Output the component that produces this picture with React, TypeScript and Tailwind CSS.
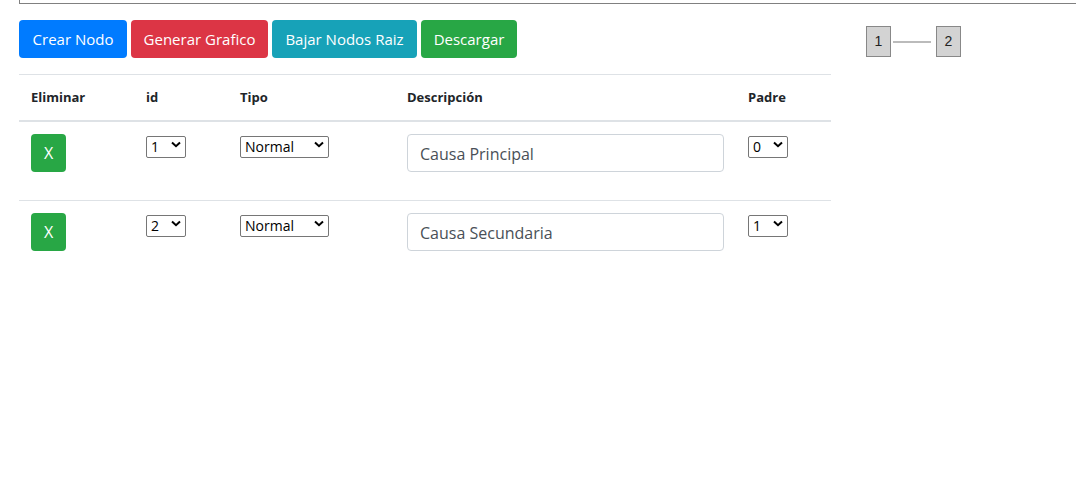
import React, { useState } from 'react';

type Nodo = { id: number; tipo: string; descripcion: string; padre: number };

const ChevronSelect: React.FC<{
  value: string;
  options: string[];
  width: string;
  onChange: (v: string) => void;
}> = ({ value, options, width, onChange }) => (
  <div className={`relative ${width} h-[22px]`}>
    <select
      value={value}
      onChange={(e) => onChange(e.target.value)}
      className="appearance-none w-full h-full border border-[#767676] rounded-[2px] bg-white pl-[4px] text-[14px] leading-[20px] text-black outline-none"
      style={{ fontFamily: '"Open Sans", "Noto Sans", sans-serif' }}
    >
      {options.map((o) => (
        <option key={o} value={o}>
          {o}
        </option>
      ))}
    </select>
    <svg
      className="pointer-events-none absolute right-[5px] top-[7px]"
      width="10"
      height="7"
      viewBox="0 0 10 7"
    >
      <path d="M1 1.5 L5 5.2 L9 1.5" fill="none" stroke="#000" strokeWidth="2" />
    </svg>
  </div>
);

export default function App() {
  const [nodos, setNodos] = useState<Nodo[]>([
    { id: 1, tipo: 'Normal', descripcion: 'Causa Principal', padre: 0 },
    { id: 2, tipo: 'Normal', descripcion: 'Causa Secundaria', padre: 1 },
  ]);

  const update = (i: number, patch: Partial<Nodo>) =>
    setNodos((prev) => prev.map((n, idx) => (idx === i ? { ...n, ...patch } : n)));

  const eliminar = (i: number) => setNodos((prev) => prev.filter((_, idx) => idx !== i));

  const btn =
    'h-[38px] rounded-[4px] text-[15px] text-white leading-[24px] whitespace-nowrap flex items-center justify-center';

  return (
    <div
      className="w-[1076px] h-[499px] overflow-hidden bg-white"
      style={{ fontFamily: '"Open Sans", "Noto Sans", sans-serif' }}
    >
      <div className="ml-[19px] h-[4px] border-l border-b border-[#808080]" />

      <div className="flex items-start pl-[19px] pt-[16px]">
        <div className="w-[812px]">
          <div className="flex gap-[4px]">
            <button className={`${btn} w-[108px] bg-[#007bff]`}>Crear Nodo</button>
            <button className={`${btn} w-[137px] bg-[#dc3545]`}>Generar Grafico</button>
            <button className={`${btn} w-[145px] bg-[#17a2b8]`}>Bajar Nodos Raiz</button>
            <button className={`${btn} w-[96px] bg-[#28a745]`}>Descargar</button>
          </div>

          <div className="mt-[16px] border-t border-[#dee2e6]">
            <div className="flex h-[47px] items-center pt-[1px] border-b-2 border-[#dee2e6] text-[13px] font-bold text-[#212529]">
              <div className="w-[127px] pl-[12px]">Eliminar</div>
              <div className="w-[94px]">id</div>
              <div className="w-[167px]">Tipo</div>
              <div className="w-[341px]">Descripción</div>
              <div>Padre</div>
            </div>

            {nodos.map((n, i) => (
              <div
                key={n.id}
                className={`flex h-[79px] items-start pt-[12px] ${i < nodos.length - 1 ? 'border-b border-[#dee2e6]' : ''}`}
              >
                <div className="w-[127px] pl-[12px]">
                  <button
                    onClick={() => eliminar(i)}
                    className="w-[35px] h-[38px] rounded-[4px] bg-[#28a745] text-white text-[16px]"
                  >
                    X
                  </button>
                </div>
                <div className="w-[94px]">
                  <ChevronSelect
                    width="w-[40px]"
                    value={String(n.id)}
                    options={['1', '2']}
                    onChange={() => {}}
                  />
                </div>
                <div className="w-[167px]">
                  <ChevronSelect
                    width="w-[89px]"
                    value={n.tipo}
                    options={['Normal', 'Raiz']}
                    onChange={(v) => update(i, { tipo: v })}
                  />
                </div>
                <div className="w-[341px]">
                  <input
                    value={n.descripcion}
                    onChange={(e) => update(i, { descripcion: e.target.value })}
                    className="w-[317px] h-[38px] rounded-[4px] border border-[#ced4da] px-[12px] pt-[2px] text-[16px] text-[#495057] outline-none"
                  />
                </div>
                <div>
                  <ChevronSelect
                    width="w-[40px]"
                    value={String(n.padre)}
                    options={['0', '1', '2']}
                    onChange={(v) => update(i, { padre: Number(v) })}
                  />
                </div>
              </div>
            ))}
          </div>
        </div>

        <div className="ml-[35px] mt-[6px] flex items-center">
          <div
            className="flex h-[31px] w-[25px] items-center justify-center border border-[#888] bg-[#d3d3d3] text-[14px] text-[#222]"
            style={{ fontFamily: 'Arial, "Liberation Sans", sans-serif' }}
          >
            1
          </div>
          <div className="mx-[2px] h-[2px] w-[38px] bg-[#bbb]" />
          <div
            className="ml-[3px] flex h-[31px] w-[25px] items-center justify-center border border-[#888] bg-[#d3d3d3] text-[14px] text-[#222]"
            style={{ fontFamily: 'Arial, "Liberation Sans", sans-serif' }}
          >
            2
          </div>
        </div>
      </div>
    </div>
  );
}
